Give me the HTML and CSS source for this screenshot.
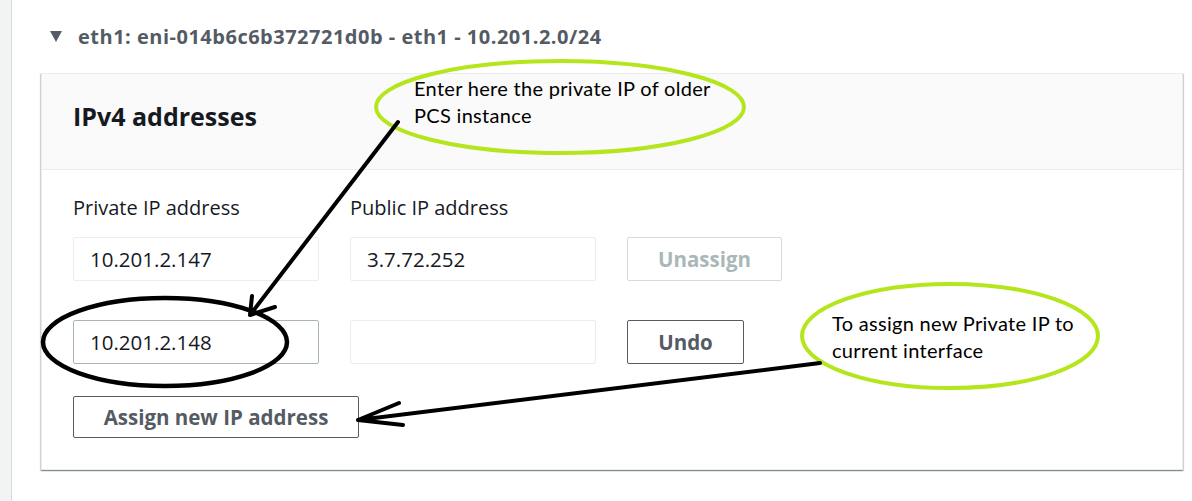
FILE: index.html
```html
<!DOCTYPE html>
<html lang="en">
<head>
<meta charset="utf-8">
<title>IPv4 addresses</title>
<link rel="stylesheet" href="styles.css">
</head>
<body>
<div class="page">
  <aside class="rail"></aside>
  <main class="content">
    <div class="section-head">
      <span class="caret"></span>
      <h2 class="section-title">eth1: eni-014b6c6b372721d0b - eth1 - 10.201.2.0/24</h2>
    </div>
    <section class="card">
      <header class="card-head">
        <h3 class="card-title">IPv4 addresses</h3>
      </header>
      <div class="card-body">
        <div class="row labels">
          <span class="label">Private IP address</span>
          <span class="label">Public IP address</span>
        </div>
        <div class="row first">
          <div class="input">10.201.2.147</div>
          <div class="input">3.7.72.252</div>
          <button class="btn btn-disabled">Unassign</button>
        </div>
        <div class="row second">
          <div class="input input-edited">10.201.2.148</div>
          <div class="input"></div>
          <button class="btn btn-undo">Undo</button>
        </div>
        <button class="btn btn-assign">Assign new IP address</button>
      </div>
    </section>
  </main>
  <svg class="annot" width="1192" height="501" viewBox="0 0 1192 501">
    <ellipse cx="560" cy="107" rx="184" ry="46" fill="none" stroke="#b5e61d" stroke-width="4"/>
    <ellipse cx="950" cy="336" rx="148" ry="52" fill="none" stroke="#b5e61d" stroke-width="4"/>
    <ellipse cx="165" cy="342" rx="122" ry="44" fill="none" stroke="#000" stroke-width="4.5"/>
    <path d="M398 122 L250 315 M250 315 L252 296 M250 315 L275 307" fill="none" stroke="#000" stroke-width="4" stroke-linecap="round"/>
    <path d="M820 363 L358 420 M358 420 L399 403 M358 420 L403 425" fill="none" stroke="#000" stroke-width="4" stroke-linecap="round"/>
    <text class="note" x="414" y="96">Enter here the private IP of older</text>
    <text class="note" x="414" y="123">PCS instance</text>
    <text class="note" x="832" y="331">To assign new Private IP to</text>
    <text class="note" x="832" y="358">current interface</text>
  </svg>
</div>
</body>
</html>
```

FILE: styles.css
```css
* { box-sizing: border-box; }
html, body { margin: 0; padding: 0; background: #fff; }
body {
  font-family: "Open Sans", "Noto Sans", sans-serif;
  color: #16191f;
}
.page {
  position: relative;
  width: 1192px;
  height: 501px;
  display: flex;
  overflow: hidden;
}
.rail {
  width: 12px;
  flex: none;
  background: #f2f3f3;
  border-right: 1px solid #d5dbdb;
}
.content {
  flex: 1;
  padding: 20px 9px 0 29px;
}
.section-head {
  display: flex;
  align-items: center;
  height: 32px;
  padding-left: 9px;
  gap: 16px;
}
.caret {
  width: 0;
  height: 0;
  border-left: 6.5px solid transparent;
  border-right: 6.5px solid transparent;
  border-top: 11px solid #545b64;
}
.section-title {
  margin: 0;
  font-size: 20px;
  letter-spacing: 0.5px;
  font-weight: 700;
  color: #545b64;
}
.card {
  margin-top: 21px;
  border: 1px solid #eaeded;
  background: #fff;
  box-shadow: 0 1px 1px 0 rgba(0,28,36,.3), 1px 1px 1px 0 rgba(0,28,36,.15), -1px 1px 1px 0 rgba(0,28,36,.15);
}
.card-head {
  height: 96px;
  background: #fafafa;
  border-bottom: 1px solid #eaeded;
  display: flex;
  align-items: center;
  padding: 0 0 12px 31px;
}
.card-title {
  margin: 0;
  font-size: 25px;
  font-weight: 700;
  color: #16191f;
}
.card-body {
  padding: 24px 31px 31px;
}
.row {
  display: flex;
  gap: 31px;
}
.labels { margin-bottom: 15px; }
.label {
  width: 246px;
  font-size: 20px;
  line-height: 28px;
}
.first { margin-bottom: 39px; }
.second { margin-bottom: 32px; }
.input {
  width: 246px;
  height: 44px;
  border: 1px solid #eaeded;
  border-radius: 2px;
  padding: 0 16px;
  font-size: 20.5px;
  line-height: 42px;
  color: #16191f;
}
.input-edited { border-color: #aab7b8; }
.btn {
  height: 44px;
  background: #fff;
  border: 1px solid #545b64;
  border-radius: 2px;
  font-family: inherit;
  font-size: 20.5px;
  font-weight: 700;
  color: #545b64;
  padding: 0;
}
.btn-disabled {
  width: 155px;
  border-color: #d5dbdb;
  color: #aab7b8;
}
.btn-undo { width: 117px; }
.btn-assign {
  width: 286px;
  height: 42px;
}
.annot {
  position: absolute;
  top: 0;
  left: 0;
  pointer-events: none;
}
.note {
  font-family: "Lato", "Liberation Sans", sans-serif;
  font-size: 20px;
  letter-spacing: 0.3px;
  fill: #000;
}
```
